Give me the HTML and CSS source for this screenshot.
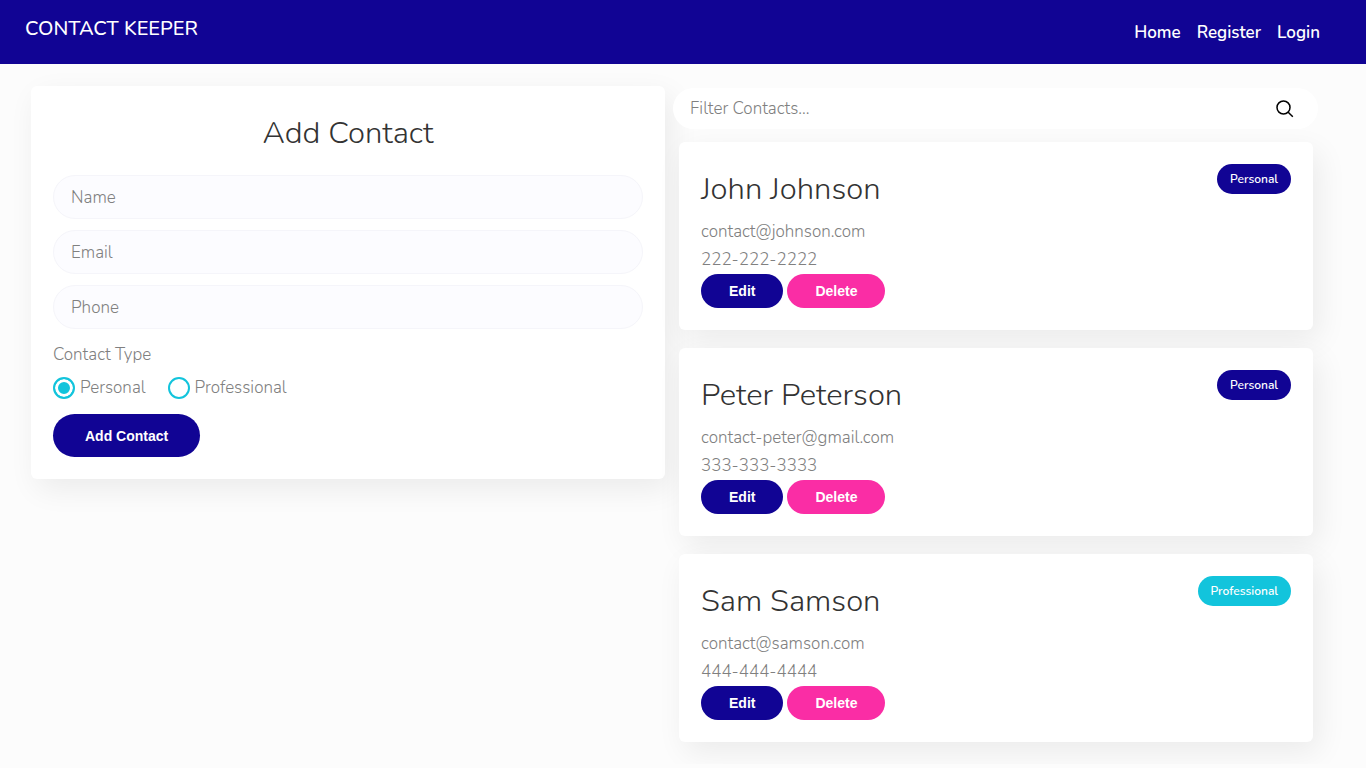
FILE: index.html
```html
<!DOCTYPE html>
<html lang="en">
<head>
<meta charset="utf-8">
<meta name="viewport" content="width=device-width, initial-scale=1">
<title>Contact Keeper</title>
<link rel="stylesheet" href="styles.css">
</head>
<body>
<header class="navbar">
  <h1 class="brand">CONTACT KEEPER</h1>
  <nav class="nav-links">
    <a href="#home">Home</a>
    <a href="#register">Register</a>
    <a href="#login">Login</a>
  </nav>
</header>
<main class="layout">
  <form class="card contact-form">
    <h2 class="title form-title">Add Contact</h2>
    <div class="fields">
      <input class="field" type="text" placeholder="Name" aria-label="Name">
      <input class="field" type="email" placeholder="Email" aria-label="Email">
      <input class="field" type="tel" placeholder="Phone" aria-label="Phone">
    </div>
    <fieldset class="types">
      <legend>Contact Type</legend>
      <div class="options">
        <label class="option"><input type="radio" name="type" value="personal" checked>Personal</label>
        <label class="option"><input type="radio" name="type" value="professional">Professional</label>
      </div>
    </fieldset>
    <button class="btn btn-large" type="submit">Add Contact</button>
  </form>
  <section class="contacts">
    <div class="search">
      <input class="search-input" type="text" placeholder="Filter Contacts..." aria-label="Filter Contacts">
      <svg class="search-icon" viewBox="0 0 18 18" aria-hidden="true"><circle cx="7.5" cy="7.5" r="6.5"/><path d="M12.2 12.2 L16.8 16.8"/></svg>
    </div>
    <div class="list">
      <article class="card contact">
        <div class="info">
          <h3 class="title">John Johnson</h3>
          <p>contact@johnson.com</p>
          <p>222-222-2222</p>
          <div class="actions"><button class="btn" type="button">Edit</button><button class="btn btn-delete" type="button">Delete</button></div>
        </div>
        <span class="badge">Personal</span>
      </article>
      <article class="card contact">
        <div class="info">
          <h3 class="title">Peter Peterson</h3>
          <p>contact-peter@gmail.com</p>
          <p>333-333-3333</p>
          <div class="actions"><button class="btn" type="button">Edit</button><button class="btn btn-delete" type="button">Delete</button></div>
        </div>
        <span class="badge">Personal</span>
      </article>
      <article class="card contact">
        <div class="info">
          <h3 class="title">Sam Samson</h3>
          <p>contact@samson.com</p>
          <p>444-444-4444</p>
          <div class="actions"><button class="btn" type="button">Edit</button><button class="btn btn-delete" type="button">Delete</button></div>
        </div>
        <span class="badge badge-pro">Professional</span>
      </article>
    </div>
  </section>
</main>
</body>
</html>
```
FILE: styles.css
```css
* { box-sizing: border-box; }
body {
  margin: 0;
  background: #fcfcfc;
  color: #808080;
  font: 300 17px/28px Nunito, "Open Sans", sans-serif;
}
h1, h2, h3, p { margin: 0; }
.navbar {
  display: flex;
  justify-content: space-between;
  min-height: 64px;
  padding: 15px 46px 13px 25px;
  background: #110494;
  color: #fff;
}
.brand { font-size: 20px; font-weight: 500; line-height: 28px; }
.nav-links { display: flex; align-items: center; gap: 16px; }
.nav-links a { color: #fff; font-size: 17px; font-weight: 600; text-decoration: none; }
.layout {
  display: grid;
  grid-template-columns: 1fr 1fr;
  align-items: start;
  gap: 14px;
  padding: 22px 53px 22px 31px;
}
.card {
  padding: 22px;
  border-radius: 6px;
  background: #fff;
  box-shadow: 6px 10px 30px rgba(0, 0, 0, 0.07);
}
.title { color: #333; font-size: 31px; font-weight: 300; line-height: 50px; }
.form-title { text-align: center; }
.fields { display: grid; gap: 11px; margin-top: 17px; }
.field {
  width: 100%;
  height: 44px;
  padding: 0 17px;
  border: 1px solid #f5f5fa;
  border-radius: 22px;
  background: #fcfcff;
  color: #333;
  font: inherit;
}
::placeholder { color: #808080; opacity: 1; }
.types { margin: 12px 0; padding: 0; border: 0; }
.types legend { padding: 0; }
.options { display: flex; gap: 22px; margin-top: 5px; }
.option { display: flex; align-items: center; gap: 5px; }
.option input {
  appearance: none;
  width: 22px;
  height: 22px;
  margin: 0;
  border: 2px solid #12c4dc;
  border-radius: 50%;
  background: #fff;
}
.option input:checked { background: #12c4dc; box-shadow: inset 0 0 0 3px #fff; }
.btn {
  height: 34px;
  padding: 0 28px;
  border: 0;
  border-radius: 17px;
  background: #110494;
  color: #fff;
  font: 700 14px/20px "Liberation Sans", Arial, sans-serif;
}
.btn-large { display: block; height: 43px; padding: 0 32px; border-radius: 22px; }
.btn-delete { background: #fa2da5; }
.search {
  display: flex;
  align-items: center;
  height: 41px;
  margin: 2px -5px 13px -6px;
  padding: 0 24px 0 17px;
  border-radius: 21px;
  background: #fff;
}
.search-input { flex: 1; min-width: 0; padding: 0; border: 0; outline: 0; background: none; color: #333; font: inherit; }
.search-icon { width: 18px; height: 18px; fill: none; stroke: #000; stroke-width: 1.5; }
.list { display: grid; gap: 18px; }
.contact { display: flex; justify-content: space-between; align-items: flex-start; gap: 20px; }
.contact .title { margin-bottom: 4px; }
.actions { display: flex; gap: 4px; }
.badge {
  padding: 5px 13px;
  border-radius: 15px;
  background: #110494;
  color: #fff;
  font-size: 12px;
  font-weight: 600;
  line-height: 20px;
}
.badge-pro { background: #12c4dc; }
```
